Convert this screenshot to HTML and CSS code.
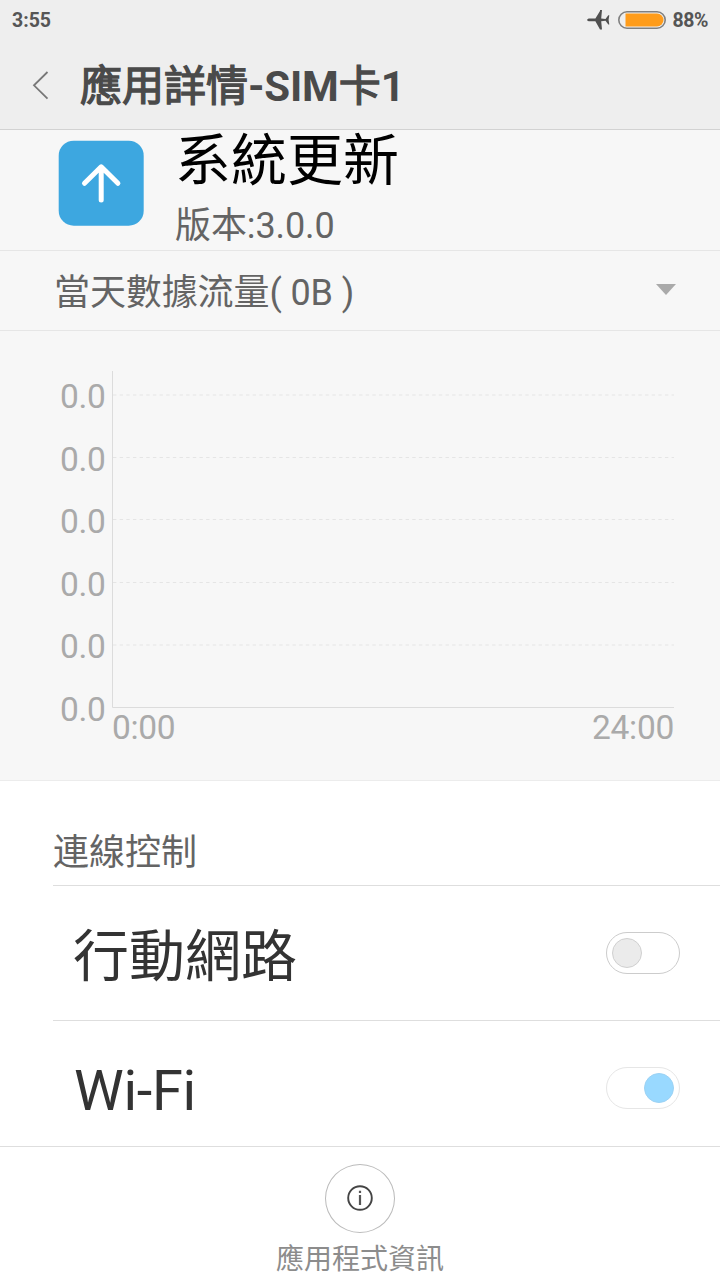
FILE: index.html
```html
<!DOCTYPE html>
<html lang="zh">
<head>
  <meta charset="UTF-8">
  <title>應用詳情</title>
  <link rel="stylesheet" href="styles.css">
</head>
<body>
  <!-- HEADER -->
  <header class="header">
    <div class="status-bar">
      <span class="time">3:55</span>
      <div class="status-right">
        <svg class="plane" width="24" height="22" viewBox="0 0 24 22">
          <path d="M1 10.8L2.6 9.4H9.4L14 2V1H16L15.2 9.4L19.5 10L22.3 6.2H23.3L22.6 10.8L23.3 15.4H22.3L19.5 11.8L15.2 12.2L16 20.5H14L9.4 12.2H2.6L1 11.2Z"/>
        </svg>
        <svg width="48" height="18" viewBox="0 0 48 18">
          <rect class="battery-frame" x="0.8" y="0.8" width="46.4" height="16.4" rx="8.2"/>
          <path class="battery-level" d="M7.5 2.5H39a6.5 6.5 0 0 1 0 13H7.5Z"/>
        </svg>
        <span class="percent">88%</span>
      </div>
    </div>
    <div class="title-bar">
      <svg class="back" width="18" height="30" viewBox="0 0 18 30">
        <path d="M15.5 2L2 15.3L15.5 28.6"/>
      </svg>
      <h1><span class="han">應用詳情</span>-SIM<span class="han">卡</span>1</h1>
    </div>
  </header>

  <!-- APP INFO -->
  <section class="app-info">
    <svg class="app-icon" width="86" height="86" viewBox="0 0 86 86">
      <rect class="icon-bg" x="0.7" y="0.7" width="85" height="85" rx="15"/>
      <path class="icon-arrow" d="M43.2 60V27.5M26.5 43.3L43.2 26.8L59.9 43.3"/>
    </svg>
    <div class="app-text">
      <div class="app-name">系統更新</div>
      <div class="app-version">版本:3.0.0</div>
    </div>
  </section>

  <section class="traffic">
    <span>當天數據流量( 0B )</span>
    <span class="arrow-down"></span>
  </section>

  <!-- CHART -->
  <section class="chart">
    <div class="y-labels">
      <span>0.0</span>
      <span>0.0</span>
      <span>0.0</span>
      <span>0.0</span>
      <span>0.0</span>
      <span>0.0</span>
    </div>
    <div class="plot">
      <svg width="562" height="337" viewBox="0 0 562 337">
        <g class="grid">
          <path d="M1 24H562"/>
          <path d="M1 86.5H562"/>
          <path d="M1 148.5H562"/>
          <path d="M1 211.5H562"/>
          <path d="M1 274H562"/>
        </g>
        <path class="axis" d="M0.5 0V336.5H562"/>
      </svg>
      <div class="x-labels">
        <span>0:00</span>
        <span>24:00</span>
      </div>
    </div>
  </section>

  <!-- CONNECTION CONTROL -->
  <section class="control">
    <h2>連線控制</h2>
    <div class="row">
      <span>行動網路</span>
      <div class="switch"><div class="knob"></div></div>
    </div>
    <div class="row row-last">
      <span>Wi-Fi</span>
      <div class="switch on"><div class="knob"></div></div>
    </div>
  </section>

  <!-- FOOTER -->
  <footer class="footer">
    <div class="info-button">
      <svg width="26" height="26" viewBox="0 0 26 26">
        <circle class="info-ring" cx="13" cy="13" r="11.8"/>
        <path class="info-mark" d="M11.9 5.8h2.2v2.2h-2.2zM11.9 10h2.2v10h-2.2z"/>
      </svg>
    </div>
    <div class="info-label">應用程式資訊</div>
  </footer>
</body>
</html>
```
FILE: styles.css
```css
* {
  box-sizing: border-box;
}

body {
  margin: 0;
  width: 720px;
  height: 1280px;
  overflow: hidden;
  background-color: #fff;
  color: #646464;
  font-family: Roboto, "Noto Sans CJK SC", sans-serif;
}

svg {
  display: block;
  fill: none;
}

.header {
  height: 130px;
  background-color: #eee;
  border-bottom: 1px solid #d2d2d2;
}

.status-bar {
  display: flex;
  justify-content: space-between;
  height: 40px;
  padding: 0 12px;
  font-size: 19.5px;
  font-weight: bold;
  line-height: 41px;
  color: #555;
}

.status-right {
  display: flex;
  align-items: center;
}

.plane {
  margin-right: 8px;
  fill: #505050;
}

.battery-frame {
  stroke: #808080;
  stroke-width: 1.6;
}

.battery-level {
  fill: #ff9c1a;
}

.percent {
  margin-left: 6px;
  letter-spacing: -0.4px;
}

.title-bar {
  display: flex;
  align-items: center;
  height: 92px;
  padding-left: 32px;
}

.back {
  margin-top: -3px;
  stroke: #777;
  stroke-width: 1.8;
}

h1 {
  margin: 2px 0 0 30px;
  font-size: 42px;
  font-weight: bold;
  line-height: 60px;
  letter-spacing: -0.2px;
  color: #4a4a4a;
}

/* regular han glyphs thickened a little, the bold cut is too heavy */
.han {
  font-weight: normal;
  letter-spacing: 0;
  -webkit-text-stroke: 1.3px #4a4a4a;
}

.app-info {
  display: flex;
  height: 121px;
  padding: 10px 58px;
  background-color: #f7f7f7;
  border-bottom: 1px solid #e6e6e6;
}

.icon-bg {
  fill: #3da7e0;
}

.icon-arrow {
  stroke: #fff;
  stroke-width: 5;
  stroke-linecap: round;
  stroke-linejoin: round;
}

.app-text {
  margin: -9px 0 0 31px;
}

.app-name {
  font-size: 56px;
  line-height: 60px;
  color: #000;
}

.app-version {
  margin-top: 13px;
  font-size: 36px;
  line-height: 44px;
  letter-spacing: -0.1px;
}

.traffic {
  display: flex;
  justify-content: space-between;
  align-items: center;
  height: 80px;
  padding: 4px 44px 0 54px;
  background-color: #f7f7f7;
  border-bottom: 1px solid #e6e6e6;
  font-size: 36px;
  line-height: 50px;
  letter-spacing: -0.1px;
}

.arrow-down {
  margin-top: -6px;
  border: 10px solid transparent;
  border-top: 11px solid #aaa;
  border-bottom: none;
}

.chart {
  display: flex;
  height: 450px;
  padding: 40px 46px 0 60px;
  background-color: #f7f7f7;
  border-bottom: 1px solid #ececec;
  font-size: 33.5px;
  letter-spacing: -0.3px;
  color: #aaa;
}

.y-labels {
  display: flex;
  flex-direction: column;
  width: 52px;
  margin-top: -5px;
}

.y-labels span {
  line-height: 62.5px;
}

.plot {
  flex: 1;
}

.grid {
  stroke: #e5e5e5;
  stroke-dasharray: 3.4 3.25;
}

.axis {
  stroke: #dcdcdc;
}

.x-labels {
  display: flex;
  justify-content: space-between;
  line-height: 40px;
}

.control {
  padding-left: 53px;
  border-bottom: 1px solid #dedede;
}

h2 {
  margin: 0;
  padding-top: 43px;
  height: 104px;
  font-size: 36px;
  font-weight: normal;
  line-height: 58px;
}

.row {
  display: flex;
  justify-content: space-between;
  align-items: center;
  height: 135px;
  padding: 0 40px 0 20px;
  border-top: 1px solid #dedede;
  font-size: 56px;
  line-height: 70px;
  color: #333;
}

.row span {
  margin-top: 8px;
}

.row-last {
  height: 126px;
  padding-top: 9px;
}

.row-last span {
  margin: 5px 0 0 1px;
  letter-spacing: -0.3px;
}

.switch {
  display: flex;
  align-items: center;
  width: 74px;
  height: 42px;
  padding: 0 5px;
  border: 1px solid #ccc;
  border-radius: 21px;
}

.knob {
  width: 30px;
  height: 30px;
  background-color: #ebebeb;
  border: 1px solid #d0d0d0;
  border-radius: 50%;
}

.on {
  justify-content: flex-end;
  border-color: #e6e6e6;
}

.on .knob {
  background-color: #99d9ff;
  border-color: #9cd2f4;
}

.footer {
  display: flex;
  flex-direction: column;
  align-items: center;
  height: 133px;
  padding-top: 17px;
}

.info-button {
  display: flex;
  justify-content: center;
  align-items: center;
  width: 70px;
  height: 70px;
  padding-bottom: 2px;
  border: 1px solid #bbb;
  border-radius: 50%;
}

.info-ring {
  stroke: #444;
  stroke-width: 1.9;
}

.info-mark {
  fill: #555;
}

.info-label {
  margin-top: 7px;
  font-size: 28px;
  line-height: 40px;
  color: #8c8c8c;
}
```
